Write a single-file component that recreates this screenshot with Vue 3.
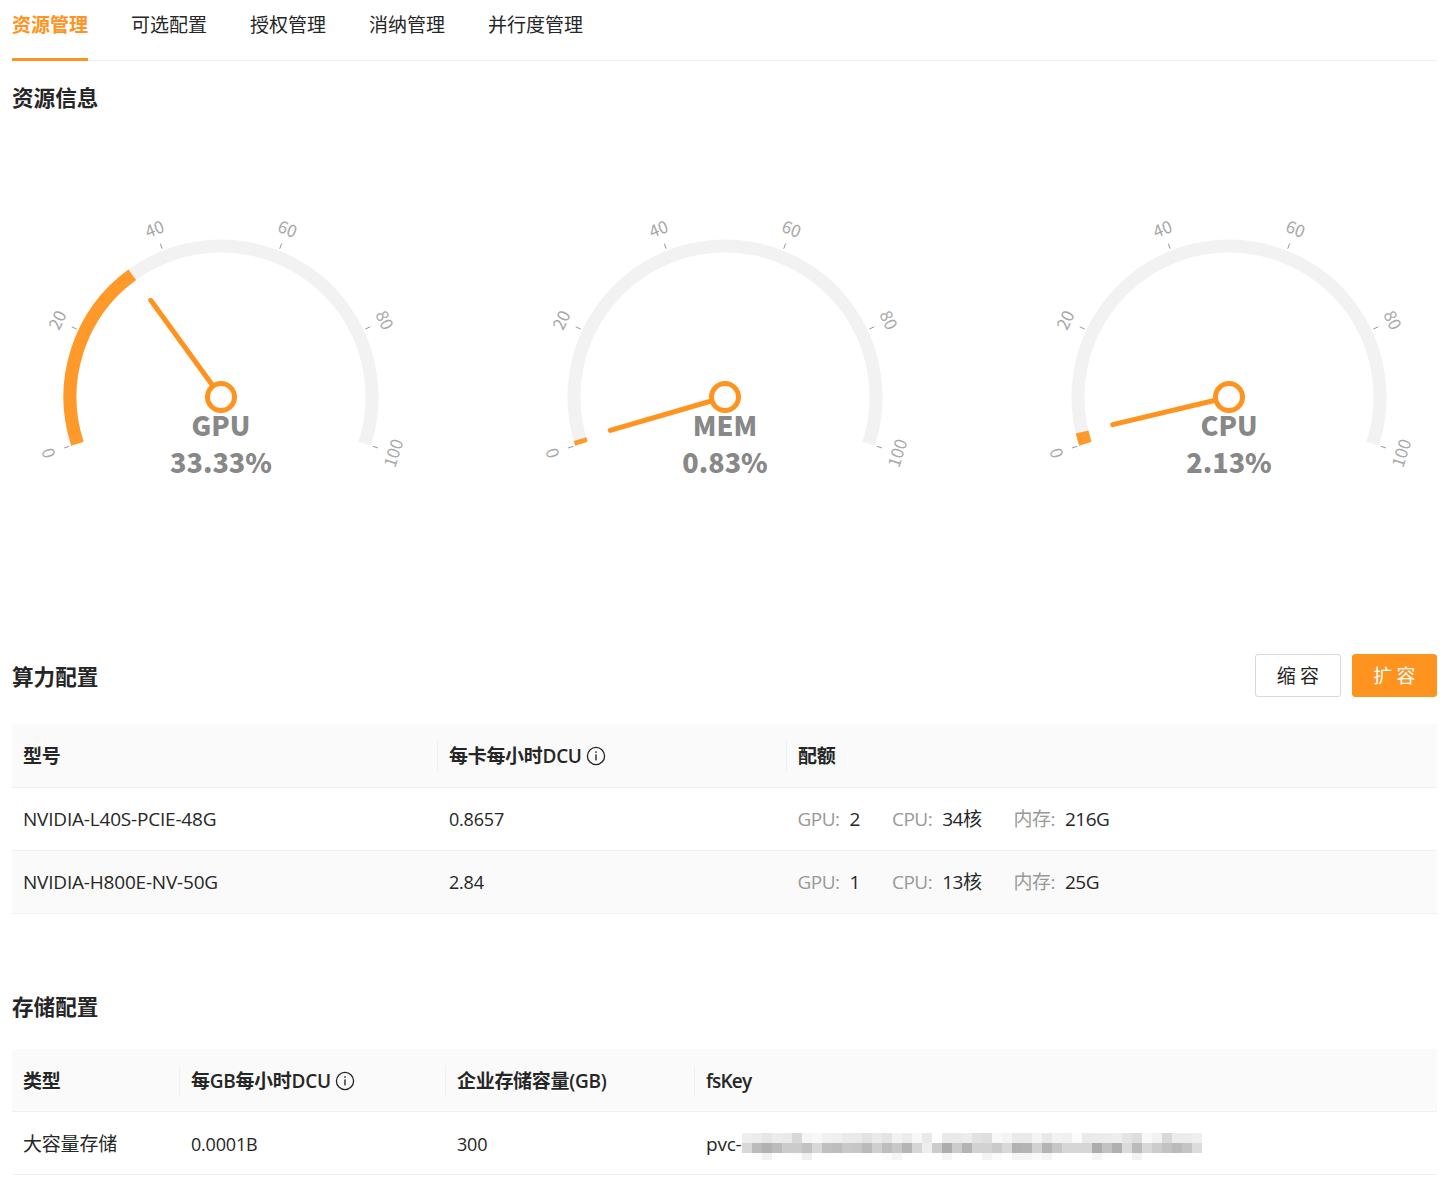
<script setup>
const tabs = ['资源管理', '可选配置', '授权管理', '消纳管理', '并行度管理']
const cx = 209
const cy = 264
const r = 151
const start = 198
const sweep = 216
const pt = (deg, rad) => {
  const a = (deg * Math.PI) / 180
  return [cx + rad * Math.cos(a), cy - rad * Math.sin(a)]
}
const arc = (from, to) => {
  const a0 = start - (sweep * from) / 100
  const a1 = start - (sweep * to) / 100
  const [x0, y0] = pt(a0, r)
  const [x1, y1] = pt(a1, r)
  const large = a0 - a1 > 180 ? 1 : 0
  return `M${x0.toFixed(2)} ${y0.toFixed(2)}A${r} ${r} 0 ${large} 1 ${x1.toFixed(2)} ${y1.toFixed(2)}`
}
const ticks = [0, 20, 40, 60, 80, 100].map((v) => {
  const deg = start - (sweep * v) / 100
  const [x1, y1] = pt(deg, 159.5)
  const [x2, y2] = pt(deg, 165)
  const [lx, ly] = pt(deg, v === 0 || v === 100 ? 180 : 182)
  let rot = 90 - deg
  if (rot > 90) rot -= 180
  if (rot < -90) rot += 180
  return { v, x1, y1, x2, y2, lx, ly, rot }
})
const gauges = [
  { name: 'GPU', value: 33.33 },
  { name: 'MEM', value: 0.83 },
  { name: 'CPU', value: 2.13 }
].map((g) => {
  const deg = start - (sweep * g.value) / 100
  const [nx, ny] = pt(deg, 119.5)
  return { ...g, nx, ny, path: arc(0, g.value) }
})
const trackPath = arc(0, 100)

const hex = (s) => s.split(' ').map((c) => `#${c}${c}${c}`)
const mosaic = [
  ...hex('ee ec e6 ec ea d8 f5 f8 f1 ef ea ea e2 ea e4 f2 ec f7 e9 ff ea ea ed e2 de f8 f4 ea ea f4 e8 f2 f0 fb ea eb ec ee e4 de f8 f2 d9 ec ec ef'),
  ...hex('d8 bb b2 bb cb cb c2 d8 c0 bd c8 c6 ba cf bd c8 b5 d6 ee cc ad cc b4 d2 d2 ca d8 b2 b4 d2 b4 c6 d6 d6 d6 ac c2 b0 da bb d8 cc c2 ba c4 dc'),
  ...hex('ff fc f2 ff ff fc ef ff ff ff ff ff ff ff fb f5 ff ff ff ff f5 ff ff ff f3 fa ff f5 f5 fa f5 ff ff ff ff f5 ff ff ff f2 ff ff ff ff ff ff')
]
const quotas = [
  [['GPU:', '2'], ['CPU:', '34核'], ['内存:', '216G']],
  [['GPU:', '1'], ['CPU:', '13核'], ['内存:', '25G']]
]
</script>

<template>
  <div class="page">
    <nav class="tabs">
      <span v-for="(t, i) in tabs" :key="t" class="tab" :class="{ active: i === 0 }">{{ t }}</span>
    </nav>

    <h2 class="title first">资源信息</h2>
    <div class="gauges">
      <svg v-for="g in gauges" :key="g.name" class="gauge" width="418" height="500" viewBox="0 0 418 500">
        <path :d="trackPath" fill="none" stroke="#f2f2f2" stroke-width="13" />
        <path :d="g.path" fill="none" stroke="#ff9929" stroke-width="13" />
        <g v-for="t in ticks" :key="t.v">
          <line :x1="t.x1" :y1="t.y1" :x2="t.x2" :y2="t.y2" stroke="#999" stroke-width="1" />
          <text
            class="tick"
            :x="t.lx"
            :y="t.ly"
            text-anchor="middle"
            dominant-baseline="central"
            :transform="`rotate(${t.rot} ${t.lx} ${t.ly})`"
          >{{ t.v }}</text>
        </g>
        <line :x1="cx" :y1="cy" :x2="g.nx" :y2="g.ny" stroke="#ff9320" stroke-width="5" stroke-linecap="round" />
        <circle :cx="cx" :cy="cy" r="13.5" fill="#fff" stroke="#ff9320" stroke-width="5" />
        <text class="g-name" :x="cx" :y="cy + 38.5" text-anchor="middle">{{ g.name }}</text>
        <text class="g-val" :x="cx" :y="cy + 76" text-anchor="middle">{{ g.value.toFixed(2) }}%</text>
      </svg>
    </div>

    <div class="head-row">
      <h2 class="title">算力配置</h2>
      <div class="btns">
        <button class="btn">缩 容</button>
        <button class="btn primary">扩 容</button>
      </div>
    </div>
    <table class="tbl">
      <colgroup><col style="width: 425px" /><col style="width: 349px" /><col /></colgroup>
      <thead>
        <tr>
          <th>型号</th>
          <th class="sep">
            <span class="th-in">每卡每小时DCU
              <svg class="info" width="20" height="20" viewBox="0 0 20 20"><circle cx="10" cy="10" r="8.6" fill="none" stroke="#262626" stroke-width="1.3" /><rect x="9.3" y="8.4" width="1.4" height="6" fill="#262626" /><rect x="9.3" y="5.3" width="1.4" height="1.6" fill="#262626" /></svg>
            </span>
          </th>
          <th class="sep">配额</th>
        </tr>
      </thead>
      <tbody>
        <tr>
          <td>NVIDIA-L40S-PCIE-48G</td>
          <td class="num">0.8657</td>
          <td><div class="quota"><span v-for="q in quotas[0]" :key="q[0]"><em>{{ q[0] }}</em>{{ q[1] }}</span></div></td>
        </tr>
        <tr class="alt">
          <td>NVIDIA-H800E-NV-50G</td>
          <td class="num">2.84</td>
          <td><div class="quota"><span v-for="q in quotas[1]" :key="q[0]"><em>{{ q[0] }}</em>{{ q[1] }}</span></div></td>
        </tr>
      </tbody>
    </table>

    <h2 class="title storage">存储配置</h2>
    <table class="tbl store">
      <colgroup><col style="width: 167px" /><col style="width: 266px" /><col style="width: 249px" /><col /></colgroup>
      <thead>
        <tr>
          <th>类型</th>
          <th class="sep">
            <span class="th-in">每GB每小时DCU
              <svg class="info" width="20" height="20" viewBox="0 0 20 20"><circle cx="10" cy="10" r="8.6" fill="none" stroke="#262626" stroke-width="1.3" /><rect x="9.3" y="8.4" width="1.4" height="6" fill="#262626" /><rect x="9.3" y="5.3" width="1.4" height="1.6" fill="#262626" /></svg>
            </span>
          </th>
          <th class="sep">企业存储容量(GB)</th>
          <th class="sep fs">fsKey</th>
        </tr>
      </thead>
      <tbody>
        <tr>
          <td>大容量存储</td>
          <td class="num">0.0001B</td>
          <td class="num">300</td>
          <td>
            <div class="fskey"><span class="pvc">pvc-</span><div class="mosaic"><i v-for="(c, i) in mosaic" :key="i" :style="{ background: c }"></i></div></div>
          </td>
        </tr>
      </tbody>
    </table>
  </div>
</template>

<style>
html, body { margin: 0; background: #fff; }
</style>

<style scoped>
.page {
  box-sizing: border-box;
  width: 1446px;
  height: 1185px;
  overflow: hidden;
  padding: 0 9px 0 12px;
  font-family: "Noto Sans CJK SC", "Noto Sans", sans-serif;
  font-size: 19px;
  color: #262626;
}
.tabs {
  display: flex;
  gap: 43px;
  height: 60px;
  border-bottom: 1px solid #f0f0f0;
}
.tab {
  position: relative;
  height: 61px;
  box-sizing: border-box;
  padding-top: 10px;
  line-height: 28px;
}
.tab.active {
  color: #ff9320;
  font-weight: 700;
  border-bottom: 3px solid #ff9320;
}
.title {
  margin: 0;
  font-size: 21.6px;
  font-weight: 700;
  line-height: 30px;
  color: #262626;
}
.title.first { margin-top: 21px; }
.gauges {
  display: flex;
  gap: 86px;
  margin-top: 21px;
}
.gauge { display: block; flex: none; }
.tick { font-size: 17px; fill: #a8a8a8; font-weight: 400; }
.g-name, .g-val { font-weight: 900; fill: #888; font-size: 27px; }
.head-row {
  display: flex;
  justify-content: space-between;
  align-items: center;
  margin-top: 21px;
}
.btns { display: flex; gap: 11px; }
.btn {
  box-sizing: border-box;
  height: 43px;
  width: 86px;
  padding: 0 0 2px;
  background: #fff;
  border: 1px solid #d9d9d9;
  border-radius: 3px;
  font: inherit;
  color: #262626;
}
.btn.primary {
  width: 85px;
  background: #ff9320;
  border-color: #ff9320;
  color: #fff;
}
.tbl {
  width: 100%;
  margin-top: 27px;
  border-collapse: collapse;
  table-layout: fixed;
  font-family: "Open Sans", "Noto Sans CJK SC", sans-serif;
}
.tbl th, .tbl td {
  padding: 0 11px;
  height: 63px;
  box-sizing: border-box;
  text-align: left;
  border-bottom: 1px solid #f0f0f0;
  font-size: 19px;
  line-height: 28px;
}
.tbl th + th, .tbl td + td { padding-left: 12px; }
.tbl th {
  position: relative;
  padding-top: 2px;
  background: #fafafa;
  font-weight: 600;
  letter-spacing: -0.3px;
}
.tbl th.fs { letter-spacing: -0.8px; }
.tbl th.sep::before {
  content: "";
  position: absolute;
  left: 0;
  top: 17px;
  height: 30px;
  width: 1px;
  background: #f0f0f0;
}
.tbl td { font-weight: 400; letter-spacing: -0.2px; }
.tbl td.num { font-size: 18px; }
.store td { padding-top: 2px; }
.alt td { background: #fafafa; }
.th-in { display: inline-flex; align-items: center; gap: 4px; }
.info { display: block; }
.quota { display: flex; gap: 32px; margin-left: -0.5px; letter-spacing: -0.5px; }
.quota em { font-style: normal; color: #999; margin-right: 10px; }
.title.storage { margin-top: 77px; }
.tbl.store { margin-top: 28px; }
.fskey { display: flex; align-items: flex-start; height: 28px; }
.pvc { width: 36px; flex: none; }
.mosaic {
  display: grid;
  grid-template-columns: repeat(46, 10px);
  grid-template-rows: 10px 10px 7px;
  margin-top: 3px;
}
</style>
